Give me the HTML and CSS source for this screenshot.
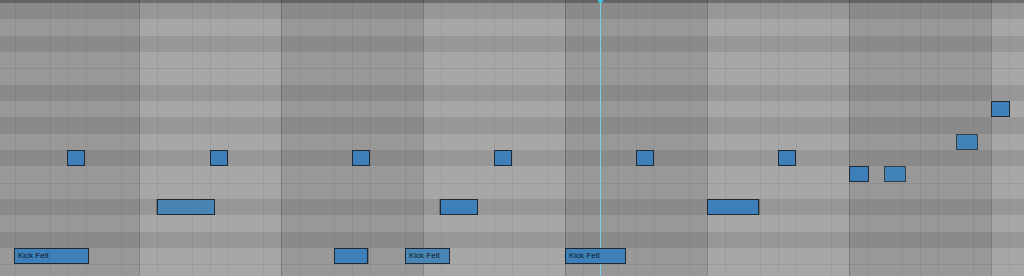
FILE: index.html
```html
<!DOCTYPE html>
<html>
<head>
    <title>Piano Roll</title>
    <link rel="stylesheet" href="styles.css">
</head>
<body>
    <div class="roll">
        <div class="topbar"></div>

        <!-- key rows, top to bottom: D# down to B -->
        <div class="keys">
            <div class="key black"></div>
            <div class="key white"></div>
            <div class="key black"></div>
            <div class="key white"></div>
            <div class="key white edge"></div>
            <div class="key black"></div>
            <div class="key white"></div>
            <div class="key black"></div>
            <div class="key white"></div>
            <div class="key black"></div>
            <div class="key white"></div>
            <div class="key white edge"></div>
            <div class="key black"></div>
            <div class="key white"></div>
            <div class="key black"></div>
            <div class="key white"></div>
            <div class="key white edge"></div>
        </div>

        <div class="bars">
            <div class="bar dim"></div>
            <div class="bar"></div>
            <div class="bar dim"></div>
            <div class="bar"></div>
            <div class="bar dim"></div>
            <div class="bar"></div>
            <div class="bar dim"></div>
            <div class="bar"></div>
        </div>

        <div class="playhead"></div>

        <div class="notes">
            <div class="note r15" style="left: 14px; width: 75px;">Kick Felt</div>
            <div class="note r9" style="left: 67px; width: 18px;"></div>
            <div class="note r12 soft sl" style="left: 157px; width: 58px;"></div>
            <div class="note r9" style="left: 210px; width: 18px;"></div>
            <div class="note r15 sr" style="left: 334px; width: 34px;"></div>
            <div class="note r9" style="left: 352px; width: 18px;"></div>
            <div class="note r15 soft" style="left: 405px; width: 45px;">Kick Felt</div>
            <div class="note r12 sl" style="left: 440px; width: 38px;"></div>
            <div class="note r9" style="left: 494px; width: 18px;"></div>
            <div class="note r15" style="left: 565px; width: 61px;">Kick Felt</div>
            <div class="note r9" style="left: 636px; width: 18px;"></div>
            <div class="note r12 sr" style="left: 707px; width: 52px;"></div>
            <div class="note r9" style="left: 778px; width: 18px;"></div>
            <div class="note r10" style="left: 849px; width: 20px;"></div>
            <div class="note r10 faded" style="left: 884px; width: 22px;"></div>
            <div class="note r8 faded" style="left: 956px; width: 22px;"></div>
            <div class="note r6" style="left: 991px; width: 19px;"></div>
        </div>
    </div>
</body>
</html>
```

FILE: styles.css
```css
body { margin: 0; background: #8a8a8a; font-family: "Liberation Sans", Arial, sans-serif; }
.roll { position: relative; width: 1024px; height: 276px; overflow: hidden; display: flex; flex-direction: column; background: #a6a6a6; }
.topbar { height: 3px; flex: 0 0 3px; background: #6e6e6e; }
.keys { display: flex; flex-direction: column; }
.key { height: 16.33px; flex: 0 0 16.33px; box-sizing: border-box; }
.white { background: #a7a7a7; }
.black { background: #979797; }
.edge { box-shadow: inset 0 1px 0 rgba(0,0,0,0.07); }

.bars { position: absolute; top: 0; bottom: 0; left: -3px; display: flex; }
.bar { flex: 0 0 142px; box-sizing: border-box; border-left: 1px solid rgba(0,0,0,0.2);
       background-image: repeating-linear-gradient(90deg, transparent 0 16.75px, rgba(0,0,0,0.06) 16.75px 17.75px); }
.bar.dim { background-color: rgba(0,0,0,0.085); }

.note { position: absolute; height: 16px; box-sizing: border-box; border: 1px solid #1d2833; background: #3d7fb8;
        font-size: 8px; line-height: 14px; color: #0e1822; padding-left: 3px; white-space: nowrap; overflow: hidden; }
.note.soft { background: #4884b4; }
.note.faded { border-color: #323e48; background: #4182b9; }
.note.sl { box-shadow: -1px 0 0 rgba(0,0,0,0.25); }
.note.sr { box-shadow: 1px 0 0 rgba(0,0,0,0.25); }
.r6 { top: 101px; }
.r8 { top: 134px; }
.r9 { top: 150px; }
.r10 { top: 166px; }
.r12 { top: 199px; }
.r15 { top: 248px; }

.playhead { position: absolute; left: 600px; top: 0; bottom: 0; width: 1px; background: #74d3e3; }
.playhead::before { content: ""; position: absolute; left: -2px; top: -2px; width: 5px; height: 5px; border-radius: 50%; background: #45c0e0; }
```
